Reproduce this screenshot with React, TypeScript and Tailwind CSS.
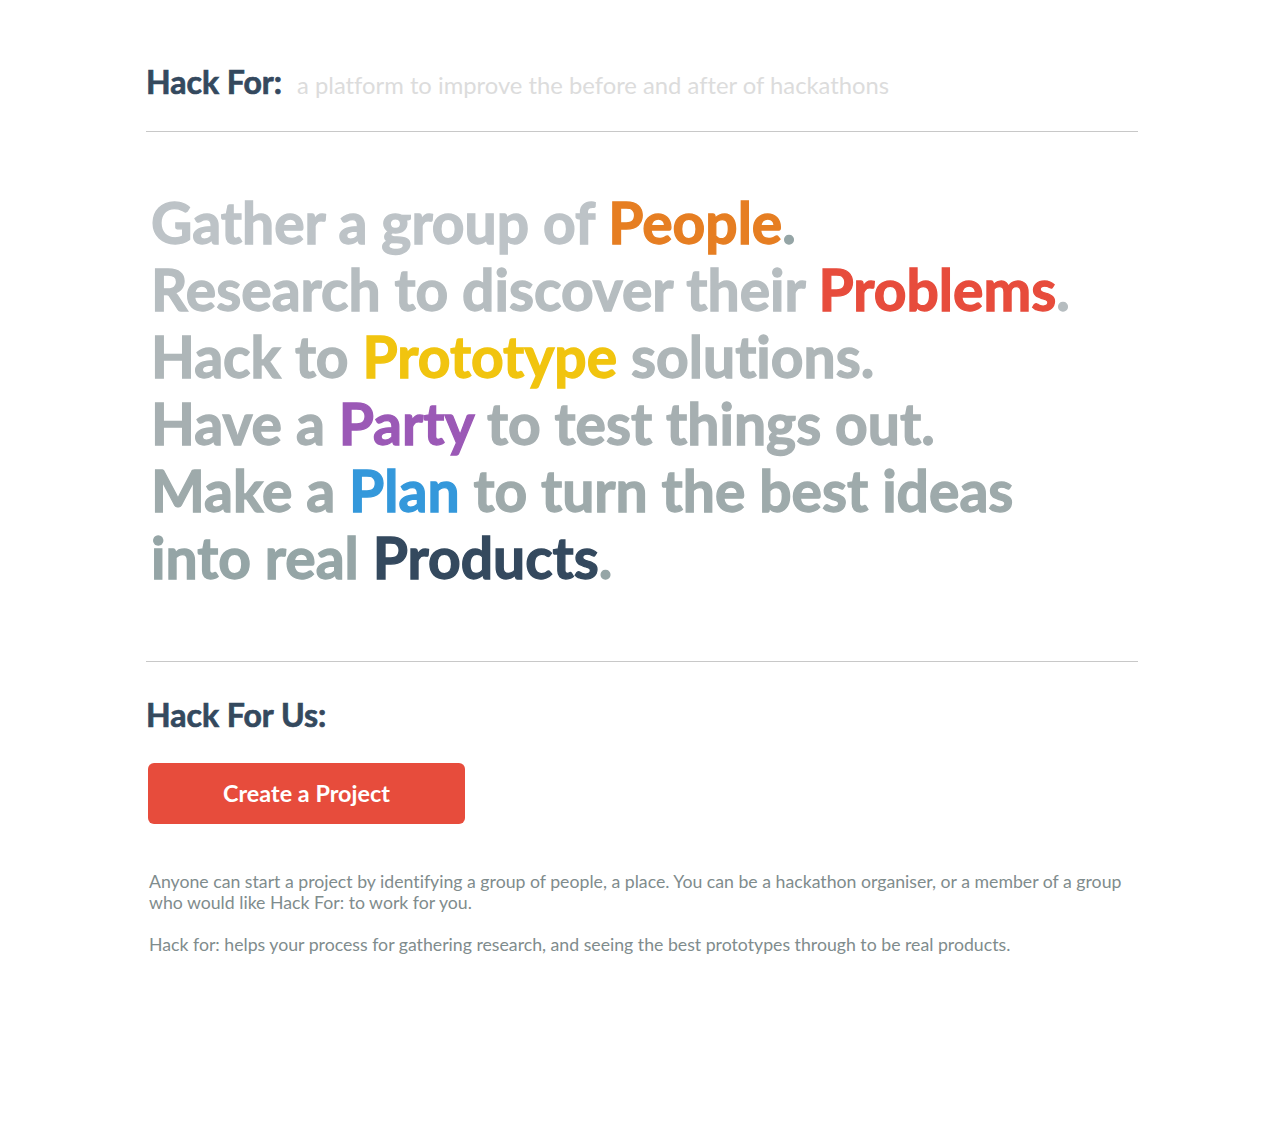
export default function App() {
  return (
    <div className="min-h-[1140px] bg-white [font-variant-ligatures:none]" style={{ fontFamily: "Lato, 'Open Sans', sans-serif" }}>
      <div className="ml-[146px] w-[992px] pt-[62px]">
        <div className="flex items-baseline gap-[15px] pb-[27px] border-b border-[#c8c8c8]">
          <h1 className="text-[32px] font-bold text-[#34495e] leading-[40px] [-webkit-text-stroke:0.7px_currentColor]">Hack For:</h1>
          <span className="text-[23.8px] font-normal text-[#dcdcdc]">a platform to improve the before and after of hackathons</span>
        </div>
        <div className="pl-[5px] pt-[57px] pb-[70px] border-b border-[#c8c8c8] text-[57px] font-bold leading-[67px] [-webkit-text-stroke:1.3px_currentColor]">
          <div className="text-[#bdc3c7]">Gather a group of <span className="text-[#e67e22]">People</span><span className="text-[#95a5a6]">.</span></div>
          <div className="text-[#b6bdc0]">Research to discover their <span className="text-[#e74c3c]">Problems</span>.</div>
          <div className="text-[#aeb6b8]">Hack to <span className="text-[#f1c40f]">Prototype</span> solutions.</div>
          <div className="text-[#a6afb1]">Have a <span className="text-[#9b59b6]">Party</span> to test things out.</div>
          <div className="text-[#9eaaab]">Make a <span className="text-[#3498db]">Plan</span> to turn the best ideas</div>
          <div className="text-[#95a5a6]">into real <span className="text-[#34495e]">Products</span>.</div>
        </div>
        <h2 className="mt-[33px] text-[32px] font-bold text-[#34495e] leading-[40px] [-webkit-text-stroke:0.7px_currentColor]">Hack For Us:</h2>
        <button className="mt-[28px] ml-[2px] w-[317px] h-[61px] rounded-[6px] bg-[#e74c3c] text-white text-[23.4px] font-bold">Create a Project</button>
        <div className="mt-[47px] pl-[3px] text-[17.7px] leading-[21px] text-[#7f8c8d]">
          <p>Anyone can start a project by identifying a group of people, a place. You can be a hackathon organiser, or a member of a group who would like Hack For: to work for you.</p>
          <p className="mt-[21px]">Hack for: helps your process for gathering research, and seeing the best prototypes through to be real products.</p>
        </div>
      </div>
    </div>
  );
}
